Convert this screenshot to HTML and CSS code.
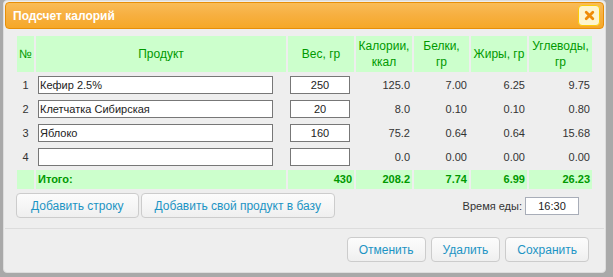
FILE: index.html
```html
<!DOCTYPE html>
<html lang="ru">
<head>
    <meta charset="UTF-8">
    <title>Подсчет калорий</title>
    <link rel="stylesheet" href="styles.css">
</head>
<body>
    <div class="dialog">
        <div class="titlebar">
            <span class="title">Подсчет калорий</span>
            <button class="close">
                <svg width="11" height="11" viewBox="0 0 11 11"><path d="M2.2 2.2L8.8 8.8M8.8 2.2L2.2 8.8" stroke="#ef8c08" stroke-width="2.8" stroke-linecap="round"/></svg>
            </button>
        </div>
        <div class="content">
            <table class="calc">
                <colgroup>
                    <col style="width:17px">
                    <col style="width:250px">
                    <col style="width:66px">
                    <col style="width:56px">
                    <col style="width:55px">
                    <col style="width:56px">
                    <col style="width:63px">
                </colgroup>
                <thead>
                    <tr>
                        <th>№</th>
                        <th>Продукт</th>
                        <th>Вес, гр</th>
                        <th>Калории, ккал</th>
                        <th>Белки,<br>гр</th>
                        <th class="nowrap">Жиры, гр</th>
                        <th>Углеводы, гр</th>
                    </tr>
                </thead>
                <tbody>
                    <tr>
                        <td class="idx">1</td>
                        <td><input class="product" value="Кефир 2.5%"></td>
                        <td><input class="weight" value="250"></td>
                        <td class="num">125.0</td>
                        <td class="num">7.00</td>
                        <td class="num">6.25</td>
                        <td class="num">9.75</td>
                    </tr>
                    <tr>
                        <td class="idx">2</td>
                        <td><input class="product" value="Клетчатка Сибирская"></td>
                        <td><input class="weight" value="20"></td>
                        <td class="num">8.0</td>
                        <td class="num">0.10</td>
                        <td class="num">0.10</td>
                        <td class="num">0.80</td>
                    </tr>
                    <tr>
                        <td class="idx">3</td>
                        <td><input class="product" value="Яблоко"></td>
                        <td><input class="weight" value="160"></td>
                        <td class="num">75.2</td>
                        <td class="num">0.64</td>
                        <td class="num">0.64</td>
                        <td class="num">15.68</td>
                    </tr>
                    <tr>
                        <td class="idx">4</td>
                        <td><input class="product" value=""></td>
                        <td><input class="weight" value=""></td>
                        <td class="num">0.0</td>
                        <td class="num">0.00</td>
                        <td class="num">0.00</td>
                        <td class="num">0.00</td>
                    </tr>
                </tbody>
                <tfoot>
                    <tr>
                        <td></td>
                        <td>Итого:</td>
                        <td class="num">430</td>
                        <td class="num">208.2</td>
                        <td class="num">7.74</td>
                        <td class="num">6.99</td>
                        <td class="num">26.23</td>
                    </tr>
                </tfoot>
            </table>
            <div class="actions">
                <button class="btn">Добавить строку</button>
                <button class="btn">Добавить свой продукт в базу</button>
                <label class="time">Время еды: <input value="16:30"></label>
            </div>
        </div>
        <div class="buttonpane">
            <button class="btn small">Отменить</button>
            <button class="btn small">Удалить</button>
            <button class="btn small">Сохранить</button>
        </div>
    </div>
</body>
</html>
```

FILE: styles.css
```css
* {
    box-sizing: border-box;
}

body {
    margin: 0;
    background: #a9a9a9;
    font-family: "Liberation Sans", Arial, sans-serif;
    font-size: 11px;
    color: #333;
}

.dialog {
    width: 603px;
    height: 273px;
    margin-left: 3px;
    padding: 1px;
    background: #eee;
    border: 1px solid #ddd;
    border-radius: 4px;
    display: flex;
    flex-direction: column;
}

.titlebar {
    height: 27px;
    display: flex;
    align-items: center;
    justify-content: space-between;
    padding: 0 3px 0 7px;
    border: 1px solid #e78f08;
    border-radius: 4px;
    background: linear-gradient(to bottom, #f9bc58 0%, #f7b042 45%, #f6a828 100%);
    color: #fff;
    font-weight: bold;
    font-size: 12px;
}

.close {
    width: 22px;
    height: 21px;
    padding: 0;
    border: 1px solid #fbcb09;
    border-radius: 4px;
    background: #fdf5ce;
    display: flex;
    align-items: center;
    justify-content: center;
}

.content {
    padding: 5px 0 0 10px;
}

.calc {
    table-layout: fixed;
    width: 579px;
    border-spacing: 2px;
}

.calc th {
    height: 36px;
    padding: 0 2px;
    background: #ccffcc;
    color: #009900;
    font-weight: normal;
    font-size: 12px;
    line-height: 16px;
    text-align: center;
}

.calc th.nowrap {
    white-space: nowrap;
}

.calc tbody td {
    height: 22px;
    padding: 2px;
    line-height: 18px;
}

.calc tfoot td {
    height: 19px;
    padding: 0 2px;
    background: #ccffcc;
    color: #009900;
    font-weight: bold;
    line-height: 19px;
}

.idx {
    text-align: center;
}

.num {
    text-align: right;
}

input {
    display: block;
    height: 18px;
    padding: 0 1px;
    border: 1px solid #777;
    background: #fff;
    font-family: "Liberation Sans", Arial, sans-serif;
    font-size: 11px;
    color: #222;
}

.product {
    width: 235px;
}

.weight {
    width: 60px;
    text-align: center;
}

.actions {
    display: flex;
    align-items: center;
    margin-top: 2px;
    padding-left: 1px;
}

.btn {
    height: 25px;
    padding: 0 14px;
    border: 1px solid #ccc;
    border-radius: 4px;
    background: linear-gradient(to bottom, #fcfcfc 0%, #f6f6f6 50%, #efefef 100%);
    color: #1c94c4;
    font-family: "Liberation Sans", Arial, sans-serif;
    font-size: 12px;
}

.actions .btn + .btn {
    margin-left: 2px;
    padding: 0 13px;
}

.time {
    display: flex;
    align-items: center;
    gap: 3px;
    margin-left: auto;
    margin-right: 25px;
}

.time input {
    width: 54px;
    border-color: #a8adb8;
    text-align: center;
}

.buttonpane {
    margin-top: 10px;
    padding: 8px 15px 0 0;
    border-top: 1px solid #dcdcdc;
    display: flex;
    justify-content: flex-end;
    gap: 5px;
}

.btn.small {
    padding: 0 11px;
}
```
